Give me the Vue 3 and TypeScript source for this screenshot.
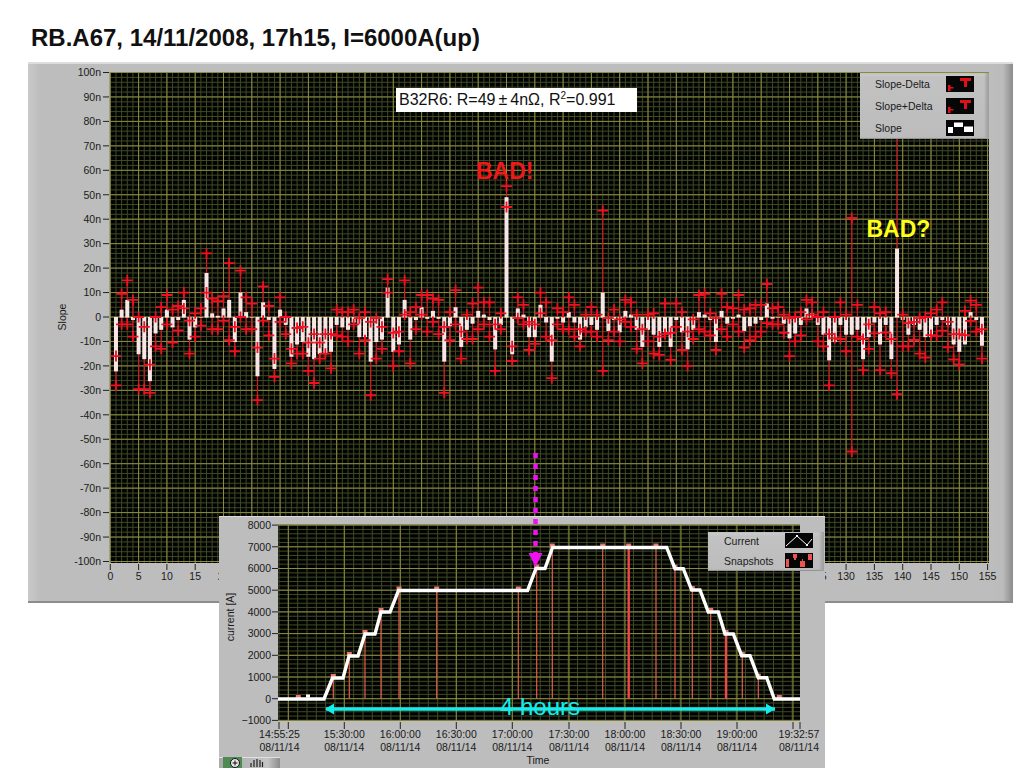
<script setup lang="ts">
type Point = [number, number, number] // slope, slope+delta, slope-delta

const points: Point[] = [
  [-22, -16, -28], [3, 9.5, -3], [7, 15, -3], [-1, 7, -8], [-15, 0, -29.5], [-17, -4, -29.5], [-26, -19.5, -31], [-6.5, 0, -12],
  [-5, 4, -13], [3, 9, -3], [-4, 3, -10.5], [-1, 4.5, -5.5], [7, 10, 3.5], [-9, -1.5, -15], [-4, 1.5, -8], [0, 3.5, -3.5],
  [18, 26, 10], [1.5, 7.5, -5], [0.5, 6.5, -5], [3.5, 8.5, -1.5], [7, 22, -9.5], [-10, -4, -14], [10, 19, 0], [2, 8, -5],
  [0, 5.5, -5], [-24, -12.5, -34], [6, 12.5, -1.5], [-1, 4.5, -7.5], [-21, -17, -24.5], [3, 8, -2], [-3, 0, -7], [-16, -13, -19],
  [-11, -4.5, -15], [-10, -4, -15], [-16, -10.5, -22], [-17, -7, -27], [-15, -10.5, -17], [-15, -7, -15], [-14, -7, -21], [-3, 3, -7.5],
  [-4, 2, -8], [-5, 2, -10], [-2, 3, -3], [-8, -0.5, -15], [-8, 2, -9.5], [-18, -2, -32], [-10, -0.5, -17], [-9, -4, -13],
  [12, 15.5, 10], [-14, -6.5, -20], [-11, -6, -14], [7, 15, 1], [-9, 2, -19], [-1, 4, -5], [4, 9, 1], [-0.5, 9, -6],
  [2.5, 7.5, -2], [-0.5, 7, -7], [-18, -4, -31], [-3.5, 2, -9.5], [4, 11, -3], [-12, -6, -17], [-5, 1, -9], [-2.5, 5.5, -9],
  [2.5, 12, -5], [1, 6, -3], [-1, 6, -8], [-13, -3, -22], [-3, 1.5, -5], [49, 53.5, 45], [-15, -12, -18], [3.5, 8, -0.5],
  [1, 5, -3], [-8, -2, -13.5], [-8, -3, -11], [5, 10, 1.5], [-2, 6, -8], [-18, -9.5, -25], [-0.5, 3.5, -3], [-2, 2, -5],
  [2, 8, -5], [-2, 5, -8], [-9, -5, -12], [-4, 1, -6], [-3, 4, -6], [-5, 1, -8], [10, 43.5, -22], [-5.5, -0.5, -9.5],
  [-1, 3, -6], [-6, -1, -10], [2.5, 7, -2], [1, 6, -4], [-5, 1, -13], [-12, -5, -19], [-5, 1, -10], [-7, 1.5, -15],
  [-12, -8, -15.5], [-6, 5.5, -7], [-12, -6.5, -17.5], [-1, 5.5, -4], [-6, 2, -13.5], [-13, -6, -20], [-5, -1, -9], [2, 9, -5],
  [1, 9.5, -6], [-1, 1.5, -7.5], [-10, -0.5, -13.5], [2.5, 9.5, -5], [-2.5, 4, -8], [-0.5, 3.5, -3], [1, 9, -6], [-5.5, 3, -12.5],
  [-3.5, 3.5, -9.5], [-2.5, 5, -8], [-1, 5, -6], [5.5, 13.5, -2.5], [-0.5, 3.5, -3], [0, 4, -3], [-2.5, 1, -6.5], [-8.5, -0.5, -16],
  [-6.5, 0, -10], [-3, 2, -7.5], [3.5, 7, -1], [1.5, 6, 1], [-3, 0, -10], [-7, 2, -12], [-17.5, -7, -28], [-10, 0, -8.7],
  [-3, 6, -9], [-7, 1, -14], [-7, 40.5, -55], [-5, 5, -8], [-17, -9, -21.7], [-8, -3, -13], [-2, 4, -6.7], [-11, 1.5, -21.7],
  [-3, 2, -6.4], [-17, -9, -23], [28, 75, -31.6], [-1, 1, -12], [-7, -2.5, -12], [-3, -2, -9.4], [-5, -0.5, -15], [-8, 0, -16.6],
  [-8, 1.5, -7.4], [-3, 3, -7.8], [-1, 6, -5.6], [-3, -2, -12.4], [-11, -7, -17.3], [-14, -7, -19.4], [-11, 2.5, -7.4], [2, 6.7, -1.6],
  [-1, 5, -6], [-11.5, -5, -17],
]

const px = (n: number) => 110.3 + 5.66 * n
const py = (v: number) => 317 - 2.445 * v

const bars = points.map(([slope, upper, lower], i) => {
  const x = px(i + 1)
  return { x, top: Math.min(py(0), py(slope)), height: Math.abs(py(slope) - py(0)) + 0.6, yUp: py(upper), yLow: py(lower) }
})

const range = (from: number, to: number, step: number) => {
  const out: number[] = []
  for (let v = from; v <= to + 0.01; v += step) out.push(v)
  return out
}

const mainMinorX = range(0, 155, 1).map(px)
const mainMinorY = range(-100, 100, 2).map(py)
const mainMajorX = range(0, 155, 5)
const mainMajorY = range(-100, 100, 10)
// 25..120 sit behind the inset, no need for labels there
const mainLabelsX = mainMajorX.filter((v) => v < 25 || v > 120)

// inset plot
const ay = (amps: number) => 698.7 - 0.0217 * amps
const insetMinorX = range(279, 800, 9.33)
const insetMinorY = range(-1000, 8000, 200).map(ay)
const insetMajorX = [288.3, 344.3, 400.3, 456.3, 512.3, 569, 625, 681, 737, 793]
const insetMajorY = range(-1000, 8000, 1000)
const timeLabels = [
  { x: 279.5, t: '14:55:25' }, { x: 344.3, t: '15:30:00' }, { x: 400.3, t: '16:00:00' }, { x: 456.3, t: '16:30:00' },
  { x: 512.3, t: '17:00:00' }, { x: 569, t: '17:30:00' }, { x: 625, t: '18:00:00' }, { x: 681, t: '18:30:00' },
  { x: 737, t: '19:00:00' }, { x: 799, t: '19:32:57' },
]
const timeTicks = [279, 288.3, 344.3, 400.3, 456.3, 512.3, 569, 625, 681, 737, 793, 800]

const currentPath =
  '278,699 324,699 332.5,678 343,678 349,656 358,656 365,634 375,634 381,612 390,612 398.5,590.5 527.5,590.5 536,568.5 545,568.5 552.5,547.5 ' +
  '666.7,547.5 675,568.7 683.3,568.7 691.7,590 700,590 708.3,612 718.3,612 725,634 733.3,634 741.7,655.7 750,655.7 758.3,677.7 766.7,677.7 774.3,699 800,699'

const snapshots = [
  { x: 298.3, y: 699 }, { x: 333.3, y: 678 }, { x: 349.3, y: 656 }, { x: 365, y: 634 }, { x: 381, y: 612 }, { x: 399, y: 590.5 },
  { x: 436.7, y: 590.5 }, { x: 518.3, y: 590.5 }, { x: 536.7, y: 568.5 }, { x: 552.3, y: 547.5 }, { x: 602.7, y: 547.5 },
  { x: 628.7, y: 547.5, wide: true }, { x: 656, y: 547.5 }, { x: 675, y: 568.7 }, { x: 692.3, y: 590 }, { x: 710.7, y: 612 },
  { x: 726, y: 634, wide: true }, { x: 742.3, y: 655.7 }, { x: 758.3, y: 677.7 }, { x: 779.3, y: 699 },
]

const mainLegend = ['Slope-Delta', 'Slope+Delta', 'Slope']
</script>

<template>
  <div class="slide">
    <h1 class="title">RB.A67, 14/11/2008, 17h15, I=6000A(up)</h1>

    <div class="panel">
      <svg class="plot" viewBox="28 62 985 541" width="985" height="541">
        <rect x="110" y="72" width="879" height="491" fill="#020300" />
        <g class="grid-minor">
          <line v-for="x in mainMinorX" :key="x" :x1="x" :x2="x" y1="72" y2="563" />
          <line v-for="y in mainMinorY" :key="y" x1="110" x2="989" :y1="y" :y2="y" />
        </g>
        <g class="grid-major">
          <line v-for="v in mainMajorX" :key="v" :x1="px(v)" :x2="px(v)" y1="72" y2="563" />
          <line v-for="v in mainMajorY" :key="v" x1="110" x2="989" :y1="py(v)" :y2="py(v)" />
        </g>

        <g class="data">
          <g class="deltas">
            <line v-for="b in bars" :key="b.x" :x1="b.x" :x2="b.x" :y1="b.yUp" :y2="b.yLow" />
          </g>
          <rect v-for="b in bars" :key="b.x" class="bar" :x="b.x - 2" :y="b.top" width="4" :height="b.height" />
          <g class="crosses">
            <template v-for="b in bars" :key="b.x">
              <path :d="`M${b.x - 5.5} ${b.yUp}h11M${b.x} ${b.yUp - 5.5}v11M${b.x - 5.5} ${b.yLow}h11M${b.x} ${b.yLow - 5.5}v11`" />
            </template>
          </g>
        </g>

        <g class="axis">
          <template v-for="v in mainMajorY" :key="v">
            <line x1="103" x2="109" :y1="py(v)" :y2="py(v)" />
            <text x="101" :y="py(v) + 3.8" text-anchor="end">{{ v === 0 ? '0' : `${v}n` }}</text>
          </template>
          <line v-for="v in mainMajorX" :key="v" :x1="px(v)" :x2="px(v)" y1="564" y2="570" />
          <text v-for="v in mainLabelsX" :key="v" :x="px(v)" y="580" text-anchor="middle">{{ v }}</text>
          <text transform="translate(66 317) rotate(-90)" text-anchor="middle">Slope</text>
        </g>
      </svg>

      <div class="fit-box">B32R6: R=49<span class="pm">±</span>4nΩ, R<sup>2</sup>=0.991</div>

      <div class="legend legend--main">
        <div v-for="(name, i) in mainLegend" :key="name" class="legend__row">
          <span class="legend__name">{{ name }}</span>
          <svg class="legend__icon" viewBox="0 0 28 16" width="28" height="16">
            <rect width="28" height="16" fill="#060606" />
            <path v-if="i < 2" d="M2 9v6h2.500v-2.500h3v-1.500h-3V9zM14 2h11v3h-4v6h-3V5h-4z" fill="#e01018" />
            <path v-else d="M2 7h5v6H2zM8 2.500h9V7H8zM18 6.500h9V12h-9z" fill="#fff" />
          </svg>
        </div>
      </div>

      <div class="inset">
        <svg class="plot" viewBox="219 516 606 252" width="606" height="252">
          <rect x="278" y="525" width="522" height="196" fill="#020300" />
          <g class="grid-minor">
            <line v-for="x in insetMinorX" :key="x" :x1="x" :x2="x" y1="525" y2="721" />
            <line v-for="y in insetMinorY" :key="y" x1="278" x2="800" :y1="y" :y2="y" />
          </g>
          <g class="grid-major">
            <line v-for="x in insetMajorX" :key="x" :x1="x" :x2="x" y1="525" y2="721" />
            <line v-for="v in insetMajorY" :key="v" x1="278" x2="800" :y1="ay(v)" :y2="ay(v)" />
          </g>

          <template v-for="s in snapshots" :key="s.x">
            <line class="snap" :class="{ 'snap--wide': s.wide }" :x1="s.x" :x2="s.x" :y1="s.y" y2="699" />
            <rect class="snap-top" :x="s.x - 2.500" :y="s.y - 4" width="5" height="4" />
          </template>
          <rect x="306" y="694.500" width="4" height="3" fill="#fff" />
          <polyline class="current" :points="currentPath" />

          <g class="hours">
            <path d="M326 709H775" />
            <path class="hours__head" d="M325 709l9-5.500v11zM775 709l-9-5.500v11z" />
            <text x="540" y="715" text-anchor="middle">4 hours</text>
          </g>

          <g class="axis">
            <template v-for="v in insetMajorY" :key="v">
              <line x1="272" x2="278" :y1="ay(v)" :y2="ay(v)" />
              <text x="271" :y="ay(v) + 3.8" text-anchor="end">{{ v < 0 ? '−1000' : v }}</text>
            </template>
            <line v-for="x in timeTicks" :key="x" :x1="x" :x2="x" y1="722" y2="729" />
            <template v-for="l in timeLabels" :key="l.x">
              <text :x="l.x" y="738" text-anchor="middle">{{ l.t }}</text>
              <text :x="l.x" y="750.500" text-anchor="middle">08/11/14</text>
            </template>
            <text transform="translate(234 617) rotate(-90)" text-anchor="middle">current [A]</text>
            <text x="538" y="764" text-anchor="middle">Time</text>
          </g>
        </svg>

        <div class="legend legend--inset">
          <div class="legend__row">
            <span class="legend__name">Current</span>
            <svg class="legend__icon" viewBox="0 0 28 15" width="28" height="15">
              <rect width="28" height="15" fill="#060606" />
              <polyline points="1,13 12,3 22,12 27,6" fill="none" stroke="#fff" />
              <path d="M11 2h2v2h-2zM21 11h2v2h-2z" fill="#fff" />
            </svg>
          </div>
          <div class="legend__row">
            <span class="legend__name">Snapshots</span>
            <svg class="legend__icon" viewBox="0 0 28 15" width="28" height="15">
              <rect width="28" height="15" fill="#060606" />
              <path d="M1 6h3v8H1zM8 1h4v4h-1v2h-2V5H8zM15 8h2V6h1v2h2v6h-5zM23 1h4v6h-4z" fill="#ec5454" />
            </svg>
          </div>
        </div>

        <div class="palette">
          <svg viewBox="0 0 19 11" width="19" height="11">
            <rect width="19" height="11" fill="#4f8a52" />
            <circle cx="12" cy="6" r="4.500" fill="#e8e8e8" stroke="#111" />
            <path d="M9.500 6h5M12 3.500v5" stroke="#111" />
          </svg>
          <svg viewBox="0 0 16 11" width="16" height="11">
            <path d="M3 6v4M6 3v7M9 2v8M12 3v7M14.500 5v5" stroke="#222" stroke-width="1.200" />
          </svg>
        </div>
      </div>

      <svg class="notes" viewBox="28 62 985 541" width="985" height="541">
        <text class="bad bad--red" x="476" y="178.500">BAD!</text>
        <text class="bad bad--yellow" x="866.500" y="237">BAD?</text>
        <path class="pointer" d="M535.500 453V553" />
        <path class="pointer-head" d="M528.500 553h14l-7 14z" />
      </svg>
    </div>
  </div>
</template>

<style>
html,
body {
  overflow: hidden;
  background: #fff;
}
</style>

<style scoped>
.slide {
  width: 1024px;
  height: 768px;
  font-family: "Liberation Sans", Arial, sans-serif;
}

.title {
  margin: 0 0 11px;
  padding: 25px 0 0 31px;
  font-size: 24px;
  line-height: 26px;
  font-weight: 700;
  color: #111;
}

.panel {
  position: relative;
  width: 985px;
  height: 541px;
  margin-left: 28px;
  background: linear-gradient(90deg, #c9c9c9 0, #bdbdbd 12px, #bdbdbd 962px, #bbb 975px, #8f8f8f 984px);
  box-shadow: inset 0 2px 0 #dcdcdc, inset 0 -2px 0 #8c8c8c;
}

.plot {
  display: block;
}

.grid-minor line {
  stroke: #3f4a26;
  stroke-width: 1;
}

.grid-major line {
  stroke: #8c8c3e;
  stroke-width: 1;
}

.data {
  filter: blur(0.35px);
}

.deltas line {
  stroke: #d01c22;
  stroke-width: 1.2;
}

.bar {
  fill: #f8e6e6;
}

.crosses path {
  fill: none;
  stroke: #f01020;
  stroke-width: 1.8;
}

.axis line {
  stroke: #222;
  stroke-width: 1;
}

.axis text {
  font-size: 10.5px;
  fill: #1a1a1a;
}

.fit-box {
  position: absolute;
  left: 368px;
  top: 26px;
  box-sizing: border-box;
  width: 241px;
  height: 24px;
  padding-left: 3px;
  background: #fff;
  font-size: 16px;
  line-height: 24px;
  color: #111;
  white-space: nowrap;
}

.fit-box sup {
  font-size: 10px;
  line-height: 0;
}

.pm {
  margin: 0 3px;
}

.legend {
  position: absolute;
  display: flex;
  flex-direction: column;
  box-sizing: border-box;
  background: linear-gradient(180deg, #d6d6d6 0, #c2c2c2 4px, #bcbcbc 100%);
  box-shadow: inset -3px 0 3px #a0a0a0, inset 0 -1px 0 #8f8f8f;
}

.legend--main {
  left: 832px;
  top: 11px;
  width: 129px;
  height: 66px;
  padding: 3px 15px 0;
  gap: 6px;
}

.legend--inset {
  left: 489px;
  top: 16px;
  width: 116px;
  height: 39px;
  padding: 1px 11px 0 16px;
  gap: 5px;
}

.legend__row {
  display: flex;
  align-items: center;
  justify-content: space-between;
}

.legend__name {
  font-size: 10.500px;
  color: #1a1a1a;
}

.legend__icon {
  display: block;
}

.inset {
  position: absolute;
  left: 191px;
  top: 454px;
  width: 606px;
  height: 252px;
  background: #bdbdbd;
  box-shadow: inset 0 1px 0 #dcdcdc;
}

.snap {
  stroke: #e2604c;
  stroke-width: 1.200;
}

.snap--wide {
  stroke: #f04848;
  stroke-width: 2.400;
}

.snap-top {
  fill: #ec7a6c;
}

.current {
  fill: none;
  stroke: #fff;
  stroke-width: 3.400;
}

.hours path {
  fill: none;
  stroke: #14ecec;
  stroke-width: 3.500;
}

.hours .hours__head {
  fill: #14ecec;
  stroke: none;
}

.hours text {
  font-size: 24px;
  fill: #14ecec;
}

.palette {
  position: absolute;
  left: 0;
  bottom: 0;
  display: flex;
  align-items: center;
  gap: 6px;
  box-sizing: border-box;
  width: 61px;
  height: 11px;
  padding-left: 4px;
  background: linear-gradient(90deg, #a8a8a8 0, #c4c4c4 80%, #8c8c8c 100%);
  box-shadow: inset 0 1px 0 #e0e0e0;
}

.palette svg {
  display: block;
}

.notes {
  position: absolute;
  left: 0;
  top: 0;
  pointer-events: none;
}

.bad {
  font-size: 23px;
  font-weight: 700;
}

.bad--red {
  fill: #f01818;
}

.bad--yellow {
  fill: #ffff1a;
}

.pointer {
  fill: none;
  stroke: #f010f0;
  stroke-width: 4.500;
  stroke-dasharray: 5 6;
}

.pointer-head {
  fill: #f010f0;
}
</style>
